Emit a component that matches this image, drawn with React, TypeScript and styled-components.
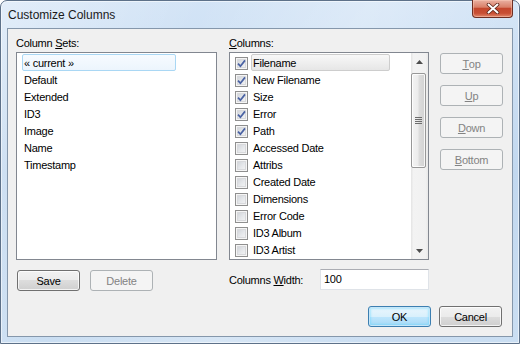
import React from "react";
import styled, { createGlobalStyle } from "styled-components";

const GlobalStyle = createGlobalStyle`
  html, body {
    margin: 0;
    padding: 0;
  }
  body {
    width: 520px;
    height: 344px;
    overflow: hidden;
    background: #ffffff;
    font-family: "Liberation Sans", Arial, sans-serif;
  }
`;

const Window = styled.div`
  width: 520px;
  height: 344px;
  box-sizing: border-box;
  display: flex;
  flex-direction: column;
  border: 1px solid #5d7189;
  border-radius: 7px 7px 0 0;
  padding: 0 6px 6px 6px;
  background: linear-gradient(
      115deg,
      rgba(255, 255, 255, 0.35) 0%,
      rgba(255, 255, 255, 0) 30%,
      rgba(255, 255, 255, 0.25) 55%,
      rgba(255, 255, 255, 0) 80%
    ),
    linear-gradient(180deg, #d3e4f6 0%, #c2d8ef 50%, #cadef2 100%);
  box-shadow: inset 0 0 0 1px rgba(255, 255, 255, 0.55);
`;

const TitleBar = styled.div`
  height: 27px;
  display: flex;
  align-items: flex-start;
`;

const Title = styled.div`
  flex: 1;
  padding: 6px 0 0 1px;
  font-size: 12px;
  line-height: 16px;
  color: #1a1a1a;
`;

const CloseButton = styled.div`
  width: 41px;
  height: 18px;
  margin-top: -1px;
  box-sizing: border-box;
  display: flex;
  align-items: center;
  justify-content: center;
  border: 1px solid #6e2e22;
  border-top: none;
  border-radius: 0 0 4px 4px;
  background: linear-gradient(
    180deg,
    #eab1a2 0%,
    #d98069 42%,
    #c4472d 50%,
    #c84f34 78%,
    #e1876b 100%
  );
  box-shadow: inset 0 0 0 1px rgba(255, 210, 190, 0.45);
`;

const Client = styled.div`
  flex: 1;
  display: flex;
  flex-direction: column;
  border: 1px solid #8597ab;
  background: #f0f0f0;
  padding: 7px 9px 9px 8px;
  font-size: 11px;
  letter-spacing: -0.25px;
  color: #000000;
`;

const MainRow = styled.div`
  display: flex;
  align-items: flex-start;
`;

const Pane = styled.div<{ $width: number; $gap: number }>`
  width: ${(p) => p.$width}px;
  margin-right: ${(p) => p.$gap}px;
  display: flex;
  flex-direction: column;
`;

const FieldLabel = styled.div`
  height: 13px;
  line-height: 15px;
  margin-bottom: 3px;
  white-space: nowrap;
`;

const ListBox = styled.div`
  height: 208px;
  box-sizing: border-box;
  border: 1px solid #828790;
  background: #ffffff;
  display: flex;
  overflow: hidden;
`;

const ListBody = styled.div<{ $left: number }>`
  flex: 1;
  padding: 1px 0 0 ${(p) => p.$left}px;
  display: flex;
  flex-direction: column;
`;

const SetItem = styled.div<{ $selected?: boolean }>`
  width: 154px;
  height: 17px;
  box-sizing: border-box;
  padding-left: 1px;
  line-height: 16px;
  border: 1px solid ${(p) => (p.$selected ? "#a9d7f4" : "transparent")};
  border-radius: 2px;
  background: ${(p) =>
    p.$selected ? "linear-gradient(180deg, #f7fbff, #ecf5fd)" : "transparent"};
  white-space: nowrap;
`;

const ColumnRow = styled.div`
  height: 17px;
  display: flex;
  align-items: center;
`;

const CheckBox = styled.span`
  width: 13px;
  height: 13px;
  box-sizing: border-box;
  flex: none;
  display: flex;
  align-items: center;
  justify-content: center;
  margin: 1px 3px 0 0;
  border: 1px solid #8f8f8f;
  background: linear-gradient(135deg, #c9cdd3 0%, #e6e8eb 55%, #f7f7f7 100%);
  box-shadow: inset 0 0 0 1px #f5f5f5, inset 0 0 0 2px #d8d9dc;
`;

const ColumnName = styled.div<{ $selected?: boolean }>`
  width: 139px;
  height: 17px;
  box-sizing: border-box;
  padding-left: 1px;
  line-height: 16px;
  border: 1px solid ${(p) => (p.$selected ? "#cdcdcd" : "transparent")};
  border-radius: 2px;
  background: ${(p) =>
    p.$selected ? "linear-gradient(180deg, #f8f8f8, #e6e6e6)" : "transparent"};
  white-space: nowrap;
`;

const ScrollBar = styled.div`
  width: 17px;
  flex: none;
  display: flex;
  flex-direction: column;
  background: linear-gradient(90deg, #e4e4e4 0%, #f3f3f3 15%, #f1f1f1 85%, #e9e9e9 100%);
`;

const ScrollArrow = styled.div`
  height: 17px;
  display: flex;
  align-items: center;
  justify-content: center;
`;

const ScrollTrack = styled.div`
  flex: 1;
  padding: 3px 1px 0 0;
`;

const Thumb = styled.div`
  width: 15px;
  height: 95px;
  box-sizing: border-box;
  border: 1px solid #979797;
  border-radius: 2px;
  display: flex;
  align-items: center;
  justify-content: center;
  background: linear-gradient(
    90deg,
    #f3f3f3 0%,
    #ececec 45%,
    #dcdcdc 55%,
    #d2d2d2 100%
  );
  box-shadow: inset 0 0 0 1px rgba(255, 255, 255, 0.8);
`;

const Button = styled.div<{ $disabled?: boolean; $default?: boolean }>`
  width: 63px;
  height: 21px;
  box-sizing: border-box;
  flex: none;
  display: flex;
  align-items: center;
  justify-content: center;
  border-radius: 3px;
  border: 1px solid
    ${(p) => (p.$disabled ? "#adb2b5" : p.$default ? "#3c7fb1" : "#707070")};
  color: ${(p) => (p.$disabled ? "#838383" : "#000000")};
  background: ${(p) =>
    p.$disabled
      ? "#f4f4f4"
      : p.$default
        ? "linear-gradient(180deg, #eaf6fd 0%, #d9f0fc 50%, #bee6fd 50%, #a7d9f5 100%)"
        : "linear-gradient(180deg, #f2f2f2 0%, #ebebeb 50%, #dddddd 50%, #cfcfcf 100%)"};
  box-shadow: ${(p) =>
    p.$disabled
      ? "none"
      : p.$default
        ? "inset 0 0 0 1px #c6e6f8, inset 0 0 2px 2px rgba(72, 210, 255, 0.35)"
        : "inset 0 0 0 1px rgba(255, 255, 255, 0.75)"};
  white-space: nowrap;
`;

const ButtonRow = styled.div`
  display: flex;
  gap: 10px;
  margin-top: 10px;
  margin-left: 1px;
`;

const WidthRow = styled.div`
  margin-top: 9px;
  display: flex;
  align-items: center;
  justify-content: space-between;
`;

const TextBox = styled.div`
  width: 109px;
  height: 21px;
  box-sizing: border-box;
  border: 1px solid #dfe3e8;
  border-top-color: #abadb3;
  background: #ffffff;
  padding: 2px 0 0 3px;
  line-height: 14px;
`;

const SideButtons = styled.div`
  margin-top: 17px;
  display: flex;
  flex-direction: column;
  gap: 11px;
`;

const Footer = styled.div`
  margin-top: 15px;
  display: flex;
  justify-content: flex-end;
  gap: 8px;
  padding-right: 1px;
`;

const columnSets = ["« current »", "Default", "Extended", "ID3", "Image", "Name", "Timestamp"];

const columns: [string, boolean][] = [
  ["Filename", true],
  ["New Filename", true],
  ["Size", true],
  ["Error", true],
  ["Path", true],
  ["Accessed Date", false],
  ["Attribs", false],
  ["Created Date", false],
  ["Dimensions", false],
  ["Error Code", false],
  ["ID3 Album", false],
  ["ID3 Artist", false],
];

const Tick = () => (
  <svg width="9" height="9" viewBox="0 0 9 9">
    <path d="M1 4.6 L3.4 7.2 L8 1.4" fill="none" stroke="#4a62a3" strokeWidth="1.7" />
  </svg>
);

const CloseGlyph = () => (
  <svg width="14" height="11" viewBox="0 0 14 11">
    <path d="M2.5 1.5 L11.5 9.5 M11.5 1.5 L2.5 9.5" stroke="#5a2418" strokeWidth="3.6" strokeLinecap="round" />
    <path d="M2.5 1.5 L11.5 9.5 M11.5 1.5 L2.5 9.5" stroke="#ffffff" strokeWidth="2" strokeLinecap="round" />
  </svg>
);

const Arrow = ({ up }: { up?: boolean }) => (
  <svg width="7" height="4" viewBox="0 0 7 4">
    <path d={up ? "M0 4 L3.5 0 L7 4 Z" : "M0 0 L3.5 4 L7 0 Z"} fill="#4d4d4d" />
  </svg>
);

const Grip = () => (
  <svg width="7" height="7" viewBox="0 0 7 7">
    <path d="M0 0.5 H7 M0 2.5 H7 M0 4.5 H7 M0 6.5 H7" stroke="#6d6d6d" strokeWidth="1" />
  </svg>
);

export default function App() {
  return (
    <>
      <GlobalStyle />
      <Window>
        <TitleBar>
          <Title>Customize Columns</Title>
          <CloseButton>
            <CloseGlyph />
          </CloseButton>
        </TitleBar>
        <Client>
          <MainRow>
            <Pane $width={201} $gap={12}>
              <FieldLabel>
                Column <u>S</u>ets:
              </FieldLabel>
              <ListBox>
                <ListBody $left={5}>
                  {columnSets.map((name, i) => (
                    <SetItem key={name} $selected={i === 0}>
                      {name}
                    </SetItem>
                  ))}
                </ListBody>
              </ListBox>
              <ButtonRow>
                <Button>Save</Button>
                <Button $disabled>Delete</Button>
              </ButtonRow>
            </Pane>
            <Pane $width={200} $gap={11}>
              <FieldLabel>
                <u>C</u>olumns:
              </FieldLabel>
              <ListBox>
                <ListBody $left={5}>
                  {columns.map(([name, checked], i) => (
                    <ColumnRow key={name}>
                      <CheckBox>{checked && <Tick />}</CheckBox>
                      <ColumnName $selected={i === 0}>{name}</ColumnName>
                    </ColumnRow>
                  ))}
                </ListBody>
                <ScrollBar>
                  <ScrollArrow>
                    <Arrow up />
                  </ScrollArrow>
                  <ScrollTrack>
                    <Thumb>
                      <Grip />
                    </Thumb>
                  </ScrollTrack>
                  <ScrollArrow>
                    <Arrow />
                  </ScrollArrow>
                </ScrollBar>
              </ListBox>
              <WidthRow>
                <span>
                  Columns <u>W</u>idth:
                </span>
                <TextBox>100</TextBox>
              </WidthRow>
            </Pane>
            <SideButtons>
              <Button $disabled>
                <u>T</u>op
              </Button>
              <Button $disabled>
                <u>U</u>p
              </Button>
              <Button $disabled>
                <u>D</u>own
              </Button>
              <Button $disabled>
                <u>B</u>ottom
              </Button>
            </SideButtons>
          </MainRow>
          <Footer>
            <Button $default>OK</Button>
            <Button>Cancel</Button>
          </Footer>
        </Client>
      </Window>
    </>
  );
}
